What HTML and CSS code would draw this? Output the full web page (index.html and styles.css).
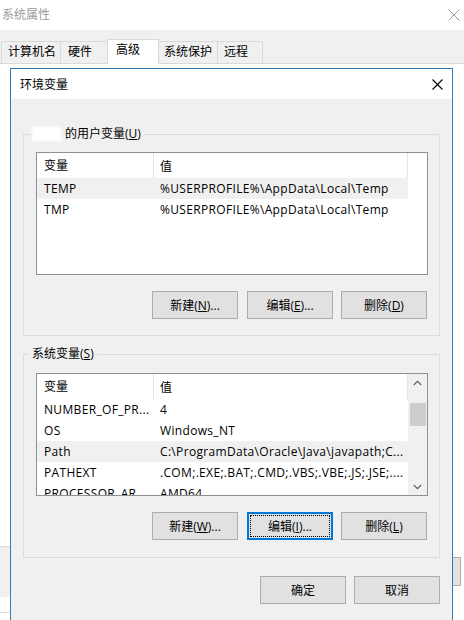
FILE: index.html
```html
<!DOCTYPE html>
<html lang="zh-CN">
<head>
<meta charset="utf-8">
<title>环境变量</title>
<link rel="stylesheet" href="styles.css">
</head>
<body>
<div class="win">
  <div class="win-title">
    <span class="win-title-text">系统属性</span>
    <svg class="win-close" width="12" height="12" viewBox="0 0 12 12"><path d="M0.5 0.5L11.5 11.5M11.5 0.5L0.5 11.5" stroke="#9a9a9a" stroke-width="1" fill="none"/></svg>
  </div>
  <div class="tabs">
    <div class="tab t1">计算机名</div>
    <div class="tab t2">硬件</div>
    <div class="tab t3 active">高级</div>
    <div class="tab t4">系统保护</div>
    <div class="tab t5">远程</div>
  </div>
  <div class="page">
    <div class="page-left">
      <div class="lbox"></div>
      <div class="lline"></div>
    </div>
    <div class="rbtn"></div>
  </div>
</div>

<div class="dialog">
  <div class="dlg-title">
    <span class="dlg-title-text">环境变量</span>
    <svg class="dlg-close" width="11" height="11" viewBox="0 0 11 11"><path d="M0.5 0.5L10.5 10.5M10.5 0.5L0.5 10.5" stroke="#000" stroke-width="1.1" fill="none"/></svg>
  </div>
  <div class="dlg-body">
    <fieldset class="group">
      <legend class="legend"><span class="blur-name"></span>的用户变量(<u>U</u>)</legend>
      <div class="list">
        <div class="cols">
          <div class="row head"><div class="c1">变量</div><div class="c2">值</div></div>
          <div class="row hl"><div class="c1">TEMP</div><div class="c2">%USERPROFILE%\AppData\Local\Temp</div></div>
          <div class="row"><div class="c1">TMP</div><div class="c2">%USERPROFILE%\AppData\Local\Temp</div></div>
        </div>
        <div class="noscroll"></div>
      </div>
      <div class="btns">
        <div class="btn">新建(<u>N</u>)...</div>
        <div class="btn">编辑(<u>E</u>)...</div>
        <div class="btn">删除(<u>D</u>)</div>
      </div>
    </fieldset>

    <fieldset class="group group2">
      <legend class="legend legend2">系统变量(<u>S</u>)</legend>
      <div class="list">
        <div class="cols">
          <div class="row head"><div class="c1">变量</div><div class="c2">值</div></div>
          <div class="row"><div class="c1">NUMBER_OF_PR...</div><div class="c2">4</div></div>
          <div class="row"><div class="c1">OS</div><div class="c2">Windows_NT</div></div>
          <div class="row hl"><div class="c1">Path</div><div class="c2">C:\ProgramData\Oracle\Java\javapath;C...</div></div>
          <div class="row"><div class="c1">PATHEXT</div><div class="c2">.COM;.EXE;.BAT;.CMD;.VBS;.VBE;.JS;.JSE;....</div></div>
          <div class="row"><div class="c1">PROCESSOR_AR...</div><div class="c2">AMD64</div></div>
        </div>
        <div class="vscroll">
          <div class="sb-btn"><svg width="9" height="6" viewBox="0 0 9 6"><path d="M0.8 5L4.5 1.3L8.2 5" stroke="#606060" stroke-width="1.2" fill="none"/></svg></div>
          <div class="sb-thumb"></div>
          <div class="sb-btn sb-down"><svg width="9" height="6" viewBox="0 0 9 6"><path d="M0.8 1L4.5 4.7L8.2 1" stroke="#606060" stroke-width="1.2" fill="none"/></svg></div>
        </div>
      </div>
      <div class="btns btns2">
        <div class="btn">新建(<u>W</u>)...</div>
        <div class="btn focus">编辑(<u>I</u>)...</div>
        <div class="btn">删除(<u>L</u>)</div>
      </div>
    </fieldset>

    <div class="footer">
      <div class="btn">确定</div>
      <div class="btn">取消</div>
    </div>
  </div>
</div>
</body>
</html>
```

FILE: styles.css
```css
* { box-sizing: border-box; }
html, body {
  margin: 0;
  padding: 0;
  width: 464px;
  height: 620px;
  overflow: hidden;
  background: #ffffff;
}
body {
  font-family: "Open Sans", "Noto Sans CJK SC", sans-serif;
  font-size: 12px;
  color: #000;
  position: relative;
}
u { text-decoration: underline; text-underline-offset: 1px; }

/* outer window (inactive, behind) */
.win {
  width: 464px;
  height: 620px;
  display: flex;
  flex-direction: column;
  background: #f0f0f0;
}
.win-title {
  height: 30px;
  background: #fff;
  display: flex;
  align-items: center;
  justify-content: space-between;
  padding: 0 4px 0 2px;
}
.win-title-text { color: #9a9a9a; line-height: 16px; }
.win-close { display: block; }

.tabs {
  height: 34px;
  display: flex;
  align-items: flex-end;
  padding-left: 1px;
  border-bottom: 1px solid #d9d9d9;
}
.tab {
  height: 22px;
  line-height: 20px;
  border: 1px solid #d9d9d9;
  border-bottom: none;
  background: #f0f0f0;
  padding-left: 6px;
  margin-left: -1px;
  white-space: nowrap;
}
.tab:first-child { margin-left: 0; }
.t1 { width: 60px; }
.t2 { width: 48px; padding-left: 7px; }
.t3 { width: 52px; padding-left: 8px; }
.t4 { width: 60px; padding-left: 5px; }
.t5 { width: 46px; }
.tab.active {
  height: 25px;
  margin-bottom: -1px;
  background: #fff;
  line-height: 20px;
  position: relative;
}
.page {
  flex: 1;
  background: #fff;
  display: flex;
  justify-content: space-between;
  align-items: flex-start;
}
.page-left {
  margin-top: 482px;
  width: 12px;
}
.lbox {
  height: 51px;
  border-top: 1px solid #dcdcdc;
  background: #f0f0f0;
}
.lline {
  margin-top: 15px;
  height: 1px;
  background: #dcdcdc;
}
.rbtn {
  margin-top: 493px;
  margin-right: 3px;
  width: 86px;
  height: 29px;
  background: #e1e1e1;
  border: 1px solid #adadad;
}

/* environment variables dialog (floating window) */
.dialog {
  position: absolute;
  left: 10px;
  top: 68px;
  width: 443px;
  height: 570px;
  border: 1px solid #2f7cb7;
  background: #f0f0f0;
  display: flex;
  flex-direction: column;
}
.dlg-title {
  height: 30px;
  background: #fff;
  display: flex;
  align-items: center;
  justify-content: space-between;
  padding: 0 9px 0 9px;
}
.dlg-title-text { line-height: 16px; padding-top: 1px; }
.dlg-close { display: block; margin-top: 1px; }

.dlg-body {
  padding: 27px 12px 0 12px;
}
.group {
  width: 417px;
  margin: 0;
  border: 1px solid #dcdcdc;
  padding: 0 0 16px 12px;
  min-width: 0;
}
.group2 {
  margin-top: 10px;
  padding-bottom: 17px;
}
.legend {
  margin-left: -5px;
  padding: 0 3px 0 2px;
  line-height: 16px;
  display: flex;
  align-items: center;
}
.legend2 { margin-left: -7px; padding-left: 3px; }
.blur-name {
  display: inline-block;
  width: 27px;
  height: 12px;
  background: #fff;
  box-shadow: 0 0 2px 1px #fff;
  margin-right: 5px;
}

.list {
  margin-top: 10px;
  width: 392px;
  height: 123px;
  border: 1px solid #8f9092;
  background: #fff;
  display: flex;
  overflow: hidden;
}
.group2 .list { margin-top: 11px; }
.cols {
  width: 371px;
  flex: none;
  overflow: hidden;
}
.row {
  display: flex;
  height: 21px;
  align-items: center;
  white-space: nowrap;
  letter-spacing: 0.33px;
}
.row.head {
  height: 25px;
  border-right: 1px solid #e5e5e5;
  letter-spacing: 0;
}
.row.hl { background: #f0f0f0; }
.c1 {
  width: 117px;
  flex: none;
  padding-left: 7px;
  overflow: hidden;
}
.c2 {
  flex: 1;
  padding-left: 6px;
  overflow: hidden;
}
.head .c1 {
  border-right: 1px solid #e5e5e5;
  height: 25px;
  line-height: 25px;
}
.noscroll { flex: 1; }
.vscroll {
  flex: 1;
  background: #f0f0f0;
  display: flex;
  flex-direction: column;
  align-items: center;
}
.sb-btn {
  height: 17px;
  width: 100%;
  display: flex;
  align-items: center;
  justify-content: center;
  flex: none;
}
.sb-btn svg { display: block; }
.sb-thumb {
  margin-top: 12px;
  width: 16px;
  height: 23px;
  background: #cdcdcd;
}
.sb-down { margin-top: auto; }

.btns {
  margin-top: 16px;
  width: 391px;
  display: flex;
  justify-content: flex-end;
  gap: 8px;
}
.btns .btn:first-child { margin-right: 1px; }
.btn {
  width: 86px;
  height: 28px;
  background: #e1e1e1;
  border: 1px solid #adadad;
  display: flex;
  align-items: center;
  justify-content: center;
  white-space: nowrap;
}
.btn.focus {
  border: 1px solid #0078d7;
  box-shadow: inset 0 0 0 1px #0078d7;
  outline: 1px dotted #000;
  outline-offset: -4px;
}
.footer {
  margin-top: 18px;
  display: flex;
  justify-content: flex-end;
  gap: 8px;
}
```
